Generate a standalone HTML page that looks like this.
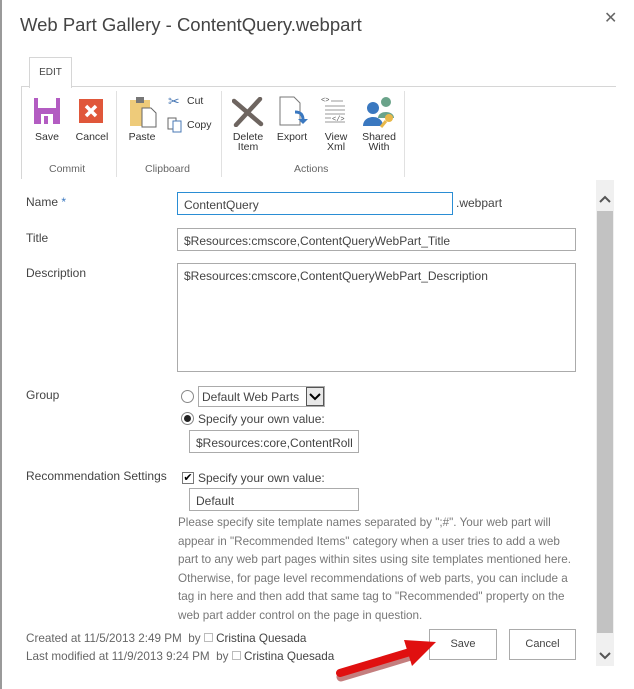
<!DOCTYPE html>
<html><head><style>
*{margin:0;padding:0;box-sizing:border-box}
body{width:634px;height:689px;background:#fff;position:relative;overflow:hidden;font-family:"Liberation Sans",sans-serif;color:#444;font-size:12px}
.a{position:absolute;white-space:nowrap}
.inp{position:absolute;border:1px solid #ababab;background:#fff;font-size:12px;padding:5px 6px;color:#444;white-space:nowrap;overflow:hidden}
.lbl{position:absolute;font-size:12px;color:#444}
.rl{position:absolute;font-size:10.5px;color:#333;text-align:center;line-height:10px}
.gl{position:absolute;font-size:10.5px;color:#666;top:163px}
</style></head><body>
<div class="a" style="left:0;top:0;width:2px;height:689px;background:#9a9a9a"></div>
<div class="a" style="left:20px;top:14px;font-size:18.5px;color:#444">Web Part Gallery - ContentQuery.webpart</div>
<div class="a" style="left:604px;top:8px;font-size:16px;color:#666">✕</div>

<div class="a" style="left:21px;top:86px;width:595px;height:93px;border-top:1px solid #d6d6d6;border-left:1px solid #d6d6d6"></div>
<div class="a" style="left:29px;top:57px;width:43px;height:31px;border:1px solid #d6d6d6;border-bottom:none;background:#fff;font-size:10px;color:#444;text-align:center;line-height:30px">EDIT</div>
<div class="a" style="left:116px;top:91px;width:1px;height:86px;background:#e1e1e1"></div>
<div class="a" style="left:221px;top:91px;width:1px;height:86px;background:#e1e1e1"></div>
<div class="a" style="left:404px;top:91px;width:1px;height:86px;background:#e1e1e1"></div>
<svg class="a" style="left:34px;top:98px" width="26" height="26"><rect x="0" y="0" width="26" height="26" fill="#b35cc2"/><rect x="4" y="0" width="18" height="10" fill="#fff"/><rect x="7" y="16" width="12" height="10" fill="#fff"/><rect x="10" y="18" width="4" height="8" fill="#b35cc2"/></svg>
<svg class="a" style="left:79px;top:99px" width="24" height="24"><rect width="24" height="24" fill="#e0573a"/><path d="M7 7L17 17M17 7L7 17" stroke="#fff" stroke-width="3.5"/></svg>
<div class="rl" style="left:25px;top:132px;width:44px">Save</div>
<div class="rl" style="left:70px;top:132px;width:44px">Cancel</div>
<div class="gl" style="left:49px">Commit</div>
<svg class="a" style="left:129px;top:96px" width="30" height="32"><rect x="1" y="4" width="20" height="26" fill="#eecb7a"/><rect x="7" y="1" width="8" height="6" fill="#777"/><path d="M13 12h9l5 5v14h-14z" fill="#fff" stroke="#666"/></svg>
<div class="rl" style="left:124px;top:132px;width:36px">Paste</div>
<div class="a" style="left:168px;top:93px;font-size:14px;color:#4a79b5">✂</div>
<div class="a" style="left:187px;top:95px;font-size:10.5px;color:#333">Cut</div>
<svg class="a" style="left:167px;top:117px" width="16" height="16"><rect x="1" y="1" width="8" height="11" fill="#fff" stroke="#666"/><rect x="6" y="4" width="8" height="11" fill="#fff" stroke="#4a79b5"/></svg>
<div class="a" style="left:187px;top:119px;font-size:10.5px;color:#333">Copy</div>
<div class="gl" style="left:145px">Clipboard</div>
<svg class="a" style="left:232px;top:97px" width="32" height="30"><path d="M2 4L29 27M28 2L4 28" stroke="#6e6560" stroke-width="4.5" stroke-linecap="round"/></svg>
<div class="rl" style="left:226px;top:132px;width:44px">Delete<br>Item</div>
<svg class="a" style="left:279px;top:96px" width="30" height="32"><path d="M1 1h14l6 6v22h-20z" fill="#fff" stroke="#777"/><path d="M16 16c6 0 8 3 8 8" stroke="#3a78c0" stroke-width="3" fill="none"/><path d="M19 23l5 5 5-5z" fill="#3a78c0"/></svg>
<div class="rl" style="left:270px;top:132px;width:44px">Export</div>
<svg class="a" style="left:321px;top:96px" width="28" height="30" font-size="7" font-family="Liberation Mono"><text x="0" y="6" fill="#555">&lt;&gt;</text><path d="M10 5h12M4 10h20M4 14h20M4 18h20M4 22h6M4 26h20" stroke="#999"/><text x="11" y="25" fill="#555">&lt;/&gt;</text></svg>
<div class="rl" style="left:314px;top:132px;width:44px">View<br>Xml</div>
<svg class="a" style="left:362px;top:96px" width="34" height="32"><circle cx="24" cy="6" r="5" fill="#6aa38a"/><path d="M16 22c0-8 16-8 16 0z" fill="#6aa38a"/><circle cx="11" cy="12" r="6" fill="#3a78c0"/><path d="M1 30c0-12 20-12 20 0z" fill="#3a78c0"/><circle cx="27" cy="22" r="4" fill="#e8b84a"/><path d="M24 25l-5 6" stroke="#e8b84a" stroke-width="3"/></svg>
<div class="rl" style="left:357px;top:132px;width:44px">Shared<br>With</div>
<div class="gl" style="left:294px">Actions</div>

<div class="a" style="left:596px;top:180px;width:18px;height:486px;background:#f0f0f0"></div>
<div class="a" style="left:597px;top:211px;width:16px;height:422px;background:#c2c2c2"></div>
<svg class="a" style="left:597px;top:193px" width="16" height="12"><path d="M3 9l5-5 5 5" stroke="#555" stroke-width="2" fill="none"/></svg>
<svg class="a" style="left:597px;top:650px" width="16" height="12"><path d="M3 3l5 5 5-5" stroke="#555" stroke-width="2" fill="none"/></svg>

<div class="lbl" style="left:26px;top:195px">Name <span style="color:#3a78c0">*</span></div>
<div class="inp" style="left:177px;top:192px;width:276px;height:23px;border-color:#2a8dd4">ContentQuery</div>
<div class="lbl" style="left:456px;top:196px">.webpart</div>
<div class="lbl" style="left:26px;top:231px">Title</div>
<div class="inp" style="left:177px;top:228px;width:399px;height:23px">$Resources:cmscore,ContentQueryWebPart_Title</div>
<div class="lbl" style="left:26px;top:266px">Description</div>
<div class="inp" style="left:177px;top:263px;width:399px;height:109px">$Resources:cmscore,ContentQueryWebPart_Description</div>
<div class="lbl" style="left:26px;top:388px">Group</div>
<div class="a" style="left:181px;top:390px;width:13px;height:13px;border:1px solid #888;border-radius:50%"></div>
<div class="a" style="left:198px;top:386px;width:127px;height:21px;border:1px solid #ababab;font-size:12px;padding:3px 3px;color:#444">Default Web Parts</div>
<div class="a" style="left:306px;top:387px;width:18px;height:19px;border:1px solid #555;background:#e8e8e8"><svg width="16" height="17"><path d="M3 6l5 5 5-5" stroke="#000" stroke-width="2" fill="none"/></svg></div>
<div class="a" style="left:181px;top:412px;width:13px;height:13px;border:1px solid #888;border-radius:50%"><div style="margin:2px;width:7px;height:7px;border-radius:50%;background:#222"></div></div>
<div class="lbl" style="left:198px;top:412px">Specify your own value:</div>
<div class="inp" style="left:189px;top:430px;width:170px;height:23px">$Resources:core,ContentRoll</div>
<div class="lbl" style="left:26px;top:469px">Recommendation Settings</div>
<div class="a" style="left:182px;top:472px;width:12px;height:12px;border:1px solid #777;font-size:11px;line-height:10px;color:#000;text-align:center">✔</div>
<div class="lbl" style="left:198px;top:471px">Specify your own value:</div>
<div class="inp" style="left:189px;top:488px;width:170px;height:23px">Default</div>
<div class="a" style="left:178px;top:514px;font-size:11.7px;color:#777;line-height:18.5px;white-space:normal;width:420px">Please specify site template names separated by ";#". Your web part will<br>appear in "Recommended Items" category when a user tries to add a web<br>part to any web part pages within sites using site templates mentioned here.<br>Otherwise, for page level recommendations of web parts, you can include a<br>tag in here and then add that same tag to "Recommended" property on the<br>web part adder control on the page in question.</div>

<div class="a" style="left:26px;top:632px;font-size:11.7px;color:#666">Created at 11/5/2013 2:49 PM&nbsp; by <span style="display:inline-block;width:9px;height:9px;border:1px solid #bbb"></span> <span style="color:#444">Cristina Quesada</span></div>
<div class="a" style="left:26px;top:650px;font-size:11.7px;color:#666">Last modified at 11/9/2013 9:24 PM&nbsp; by <span style="display:inline-block;width:9px;height:9px;border:1px solid #bbb"></span> <span style="color:#444">Cristina Quesada</span></div>
<div class="a" style="left:429px;top:629px;width:68px;height:31px;border:1px solid #ababab;font-size:11px;text-align:center;line-height:29px;color:#444">Save</div>
<div class="a" style="left:509px;top:629px;width:67px;height:31px;border:1px solid #ababab;font-size:11px;text-align:center;line-height:29px;color:#444">Cancel</div>
<svg class="a" style="left:330px;top:636px" width="110" height="50"><path d="M10 38L80 17" stroke="#8a0000" stroke-width="9" stroke-linecap="round" opacity=".5" transform="translate(1,3)"/><path d="M10 37L80 16" stroke="#e01010" stroke-width="8" stroke-linecap="round"/><path d="M74 4L106 6L82 30z" fill="#e01010"/></svg>
</body></html>
